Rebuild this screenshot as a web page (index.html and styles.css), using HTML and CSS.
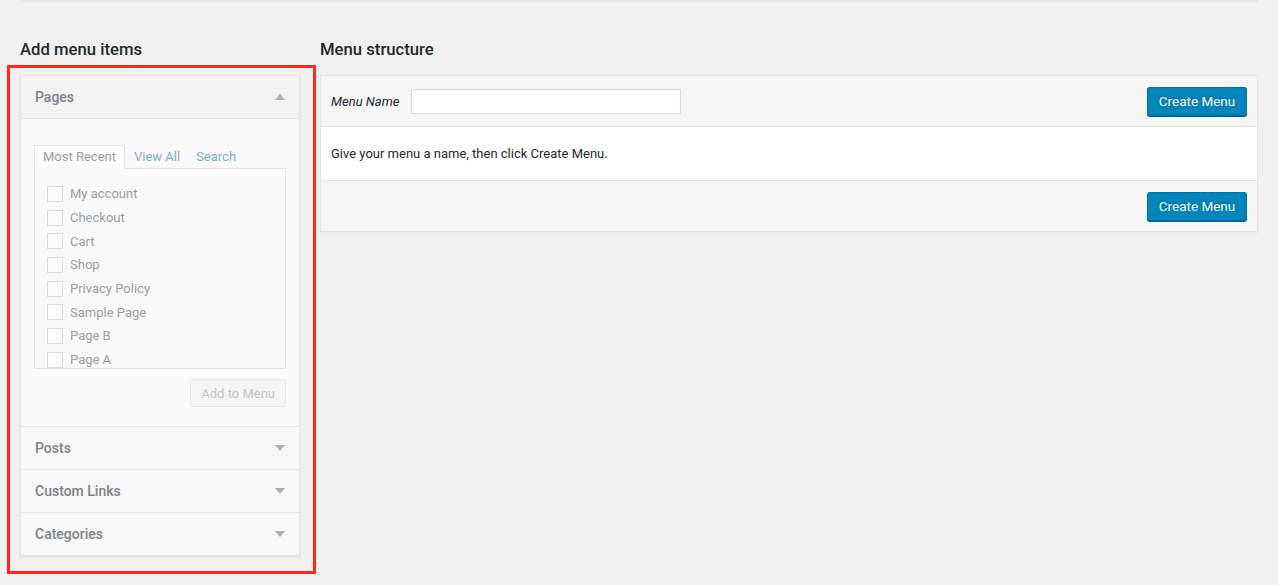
FILE: index.html
```html
<!DOCTYPE html>
<html lang="en">
<head>
    <meta charset="UTF-8">
    <title>Menus</title>
    <link rel="stylesheet" href="styles.css">
</head>
<body>
    <div class="wrap">
        <div class="top-box"></div>

        <div class="columns">
            <div class="col-left">
                <h2>Add menu items</h2>
                <div class="accordion-wrap">
                    <div class="highlight"></div>
                    <div class="accordion">
                        <div class="section open">
                            <div class="section-title">
                                <span>Pages</span>
                                <span class="arrow up"></span>
                            </div>
                            <div class="section-content">
                                <div class="tabs">
                                    <span class="tab active">Most Recent</span>
                                    <span class="tab">View All</span>
                                    <span class="tab">Search</span>
                                </div>
                                <div class="tab-panel">
                                    <ul class="checklist">
                                        <li><span class="check"></span>My account</li>
                                        <li><span class="check"></span>Checkout</li>
                                        <li><span class="check"></span>Cart</li>
                                        <li><span class="check"></span>Shop</li>
                                        <li><span class="check"></span>Privacy Policy</li>
                                        <li><span class="check"></span>Sample Page</li>
                                        <li><span class="check"></span>Page B</li>
                                        <li><span class="check"></span>Page A</li>
                                    </ul>
                                </div>
                                <div class="actions">
                                    <button class="btn-disabled" disabled>Add to Menu</button>
                                </div>
                            </div>
                        </div>
                        <div class="section">
                            <div class="section-title">
                                <span>Posts</span>
                                <span class="arrow"></span>
                            </div>
                        </div>
                        <div class="section">
                            <div class="section-title">
                                <span>Custom Links</span>
                                <span class="arrow"></span>
                            </div>
                        </div>
                        <div class="section">
                            <div class="section-title">
                                <span>Categories</span>
                                <span class="arrow"></span>
                            </div>
                        </div>
                    </div>
                </div>
            </div>

            <div class="col-right">
                <h2>Menu structure</h2>
                <div class="menu-edit">
                    <div class="menu-header">
                        <label class="menu-name">
                            <em>Menu Name</em>
                            <input type="text">
                        </label>
                        <button class="btn-primary">Create Menu</button>
                    </div>
                    <div class="menu-body">
                        Give your menu a name, then click Create Menu.
                    </div>
                    <div class="menu-footer">
                        <button class="btn-primary">Create Menu</button>
                    </div>
                </div>
            </div>
        </div>
    </div>
</body>
</html>
```

FILE: styles.css
```css
* {
    margin: 0;
    padding: 0;
    box-sizing: border-box;
}

body {
    background: #f1f1f1;
    font-family: Roboto, 'Liberation Sans', sans-serif;
    font-size: 13px;
    color: #23282d;
}

.wrap {
    padding: 0 20px 40px;
}

.top-box {
    height: 1px;
    background: #e5e5e5;
    box-shadow: 0 1px 1px rgba(0, 0, 0, 0.04);
}

.columns {
    display: flex;
    gap: 20px;
    margin-top: 39px;
}

h2 {
    font-size: 16.7px;
    font-weight: 500;
    line-height: 20px;
    color: #23282d;
    margin-bottom: 15px;
}

.col-left {
    width: 280px;
    flex-shrink: 0;
}

.col-right {
    flex: 1;
}

/* accordion */
.accordion-wrap {
    position: relative;
}

.highlight {
    position: absolute;
    left: -13px;
    top: -10px;
    width: 309px;
    height: 509px;
    border: 3px solid #ff2a1f;
    pointer-events: none;
}

.accordion {
    border: 1px solid #e5e5e5;
    box-shadow: 0 1px 2px rgba(0, 0, 0, 0.08);
}

.section {
    border-bottom: 1px solid #e5e5e5;
    background: #f8f8f8;
}

.section:last-child {
    border-bottom: none;
}

.section-title {
    height: 42px;
    padding: 0 14px;
    display: flex;
    align-items: center;
    justify-content: space-between;
    font-size: 14px;
    font-weight: 500;
    color: #7e8388;
}

.section.open .section-title {
    background: #f3f3f3;
    border-bottom: 1px solid #e5e5e5;
    height: 43px;
}

.arrow {
    width: 0;
    height: 0;
    border-left: 5px solid transparent;
    border-right: 5px solid transparent;
    border-top: 6px solid #a9adb1;
}

.arrow.up {
    border-top: none;
    border-bottom: 6px solid #a9adb1;
}

.section-content {
    background: #f9f9f9;
    padding: 26px 13px 19px 13px;
}

.tabs {
    display: flex;
    align-items: flex-end;
    height: 23px;
}

.tab {
    padding: 0 8px;
    line-height: 22px;
    color: #77aed6;
    font-size: 13px;
}

.tab.active {
    color: #9a9ea3;
    border: 1px solid #e5e5e5;
    border-bottom: none;
    background: #fbfbfb;
    height: 24px;
    margin-bottom: -1px;
    position: relative;
    margin-right: 1px;
}

.tab-panel {
    border: 1px solid #e5e5e5;
    height: 201px;
    overflow: hidden;
    padding: 13px 12px 0;
}

.checklist {
    list-style: none;
}

.checklist li {
    display: flex;
    align-items: center;
    height: 23.7px;
    color: #9a9ea3;
    font-size: 13px;
}

.check {
    width: 16px;
    height: 16px;
    border: 1px solid #dadada;
    background: #fbfbfb;
    margin-right: 7px;
}

.actions {
    display: flex;
    justify-content: flex-end;
    margin-top: 10px;
}

.btn-disabled {
    font-family: inherit;
    font-size: 13px;
    color: #c4c4c4;
    background: #f5f5f5;
    border: 1px solid #e8e8e8;
    border-radius: 3px;
    height: 28px;
    padding: 0 10px;
}

/* menu structure */
.menu-edit {
    border: 1px solid #e5e5e5;
    box-shadow: 0 1px 1px rgba(0, 0, 0, 0.04);
}

.menu-header {
    background: #f5f5f5;
    height: 51px;
    padding: 0 10px;
    display: flex;
    align-items: center;
    justify-content: space-between;
    border-bottom: 1px solid #e5e5e5;
}

.menu-name {
    display: flex;
    align-items: center;
}

.menu-name em {
    margin-right: 12px;
}

.menu-name input {
    width: 270px;
    height: 25px;
    border: 1px solid #ddd;
    background: #fff;
    box-shadow: inset 0 1px 2px rgba(0, 0, 0, 0.04);
}

.menu-body {
    background: #fff;
    height: 54px;
    padding: 0 10px;
    display: flex;
    align-items: center;
    border-bottom: 1px solid #e5e5e5;
}

.menu-footer {
    background: #f5f5f5;
    height: 50px;
    padding: 0 10px;
    display: flex;
    align-items: center;
    justify-content: flex-end;
}

.btn-primary {
    font-family: inherit;
    font-size: 13.5px;
    color: #fff;
    background: #0085ba;
    border: 1px solid #0073aa;
    border-bottom-color: #006799;
    border-radius: 3px;
    box-shadow: 0 1px 0 #006799;
    height: 29px;
    width: 100px;
    text-shadow: 0 -1px 1px #006799;
}
```
